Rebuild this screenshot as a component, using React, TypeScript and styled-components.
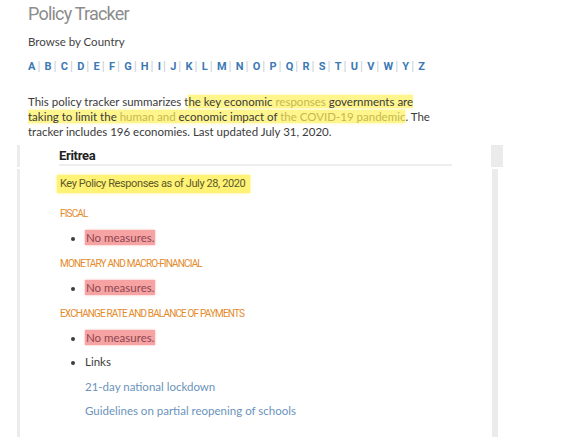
import React from 'react'
import styled, { createGlobalStyle } from 'styled-components'

const GlobalStyle = createGlobalStyle`
  html, body {
    margin: 0;
    padding: 0;
    background: #fff;
  }
  body {
    font-family: Lato, "Open Sans", sans-serif;
    color: #3d3d3d;
  }
`

// condensed look for the headings
const narrow = `Roboto, "Liberation Sans", sans-serif`

const letters = 'ABCDEFGHIJKLMNOPQRSTUVWYZ'.split('')

const sections = [
  { title: 'FISCAL', items: ['No measures.'] },
  { title: 'MONETARY AND MACRO-FINANCIAL', items: ['No measures.'] },
  { title: 'EXCHANGE RATE AND BALANCE OF PAYMENTS', items: ['No measures.'] },
]

const links = ['21-day national lockdown', 'Guidelines on partial reopening of schools']

export default function App() {
  return (
    <Page>
      <GlobalStyle />
      <Intro>
        <PageTitle>Policy Tracker</PageTitle>
        <Browse>Browse by Country</Browse>
        <LetterBar>
          {letters.map((l, i) => (
            <LetterItem key={l}>
              <Letter href='#'>{l}</Letter>
              {i < letters.length - 1 && <Sep>|</Sep>}
            </LetterItem>
          ))}
        </LetterBar>
        <Summary>
          This policy tracker summarizes t
          <Mark>
            he key economic <Faded>responses</Faded> governments are taking to limit the <Faded>human and</Faded>{' '}
            economic impact of <Faded>the COVID-19 pandemic</Faded>
          </Mark>
          . The tracker includes 196 economies. Last updated July 31, 2020.
        </Summary>
      </Intro>

      <Panel>
        <HeaderRow>
          <Rule />
          <HeaderContent>
            <Country>Eritrea</Country>
          </HeaderContent>
          <HeaderBlock />
        </HeaderRow>
        <BodyRow>
          <Rule />
          <BodyContent>
            <AsOf>Key Policy Responses as of July 28, 2020</AsOf>
            {sections.map((s, idx) => (
              <Section key={s.title}>
                <SectionTitle>{s.title}</SectionTitle>
                <BulletList>
                  {s.items.map((it) => (
                    <Bullet key={it}>
                      <Alert>{it}</Alert>
                    </Bullet>
                  ))}
                  {idx === sections.length - 1 && (
                    <Bullet>
                      Links
                      <LinkList>
                        {links.map((t) => (
                          <LinkItem key={t} href='#'>
                            {t}
                          </LinkItem>
                        ))}
                      </LinkList>
                    </Bullet>
                  )}
                </BulletList>
              </Section>
            ))}
          </BodyContent>
          <ScrollBar />
        </BodyRow>
      </Panel>
    </Page>
  )
}

const Page = styled.div`
  width: 583px;
  height: 437px;
  overflow: hidden;
`

const Intro = styled.div`
  padding: 2px 0 0 28px;
`

const PageTitle = styled.h1`
  margin: 0;
  font-family: ${narrow};
  font-weight: normal;
  font-size: 18px;
  letter-spacing: -0.8px;
  line-height: 24px;
  color: #8c8c8c;
`

const Browse = styled.div`
  margin-top: 8px;
  font-size: 11.5px;
  line-height: 16px;
  color: #444;
`

const LetterBar = styled.div`
  display: flex;
  margin-top: 8px;
  height: 16px;
  align-items: center;
`

const LetterItem = styled.span`
  display: inline-flex;
  align-items: center;
`

const Letter = styled.a`
  font-family: ${narrow};
  font-weight: bold;
  font-size: 11px;
  color: #3b79b4;
  text-decoration: none;
`

const Sep = styled.span`
  font-family: ${narrow};
  font-size: 12px;
  color: #c8cdd3;
  margin: 0 4.25px 0 2px;
`

const Summary = styled.p`
  margin: 20px 0 0;
  width: 405px;
  font-size: 11.5px;
  line-height: 15px;
  color: #3a3a3a;
`

const Mark = styled.span`
  background: rgba(255, 240, 80, 0.65);
  box-shadow: 0 0 3px rgba(255, 240, 80, 0.6);
`

const Faded = styled.span`
  color: #c4b84e;
`

const Panel = styled.div`
  margin: 6px 0 0 17px;
  width: 486px;
`

const HeaderRow = styled.div`
  display: flex;
  height: 22px;
`

const Rule = styled.div`
  width: 3px;
  flex: none;
  background: #ececec;
`

const HeaderContent = styled.div`
  flex: 1;
  padding: 3px 0 0 39px;
`

const Country = styled.div`
  width: 393px;
  height: 16px;
  border-bottom: 2px solid #eeeeee;
  font-family: ${narrow};
  font-weight: bold;
  font-size: 13px;
  letter-spacing: -0.3px;
  line-height: 16px;
  color: #222;
`

const HeaderBlock = styled.div`
  width: 12px;
  flex: none;
  background: #ebebeb;
`

const BodyRow = styled.div`
  display: flex;
  margin-top: 2px;
  height: 300px;
`

const BodyContent = styled.div`
  flex: 1;
  padding: 2px 0 0 37px;
`

const ScrollBar = styled.div`
  width: 6px;
  flex: none;
  margin-right: 5px;
  background: #ebebeb;
`

const AsOf = styled.span`
  display: inline-block;
  padding: 2px 5px 2px 3px;
  font-family: ${narrow};
  font-size: 11px;
  letter-spacing: -0.4px;
  line-height: 14px;
  color: #5d5a2a;
  background: rgba(255, 238, 70, 0.75);
  box-shadow: 0 0 3px rgba(255, 238, 70, 0.7);
`

const Section = styled.div`
  margin-top: 11px;
  &:first-of-type {
    margin-top: 14px;
  }
`

const SectionTitle = styled.div`
  padding-left: 3px;
  font-family: ${narrow};
  font-size: 10px;
  letter-spacing: -0.85px;
  line-height: 14px;
  color: #e58a2a;
`

const BulletList = styled.ul`
  margin: 8px 0 0;
  padding-left: 28px;
  font-size: 11.5px;
  line-height: 17px;
  color: #3c3c3c;
`

const Bullet = styled.li`
  margin-bottom: 7px;
`

const Alert = styled.span`
  padding: 1px 1px;
  background: #f7a3a3;
  color: #8d4651;
  box-shadow: 0 0 2px rgba(247, 140, 140, 0.7);
`

const LinkList = styled.div`
  display: flex;
  flex-direction: column;
  gap: 7px;
  margin-top: 8px;
`

const LinkItem = styled.a`
  color: #6b93ba;
  text-decoration: none;
`
